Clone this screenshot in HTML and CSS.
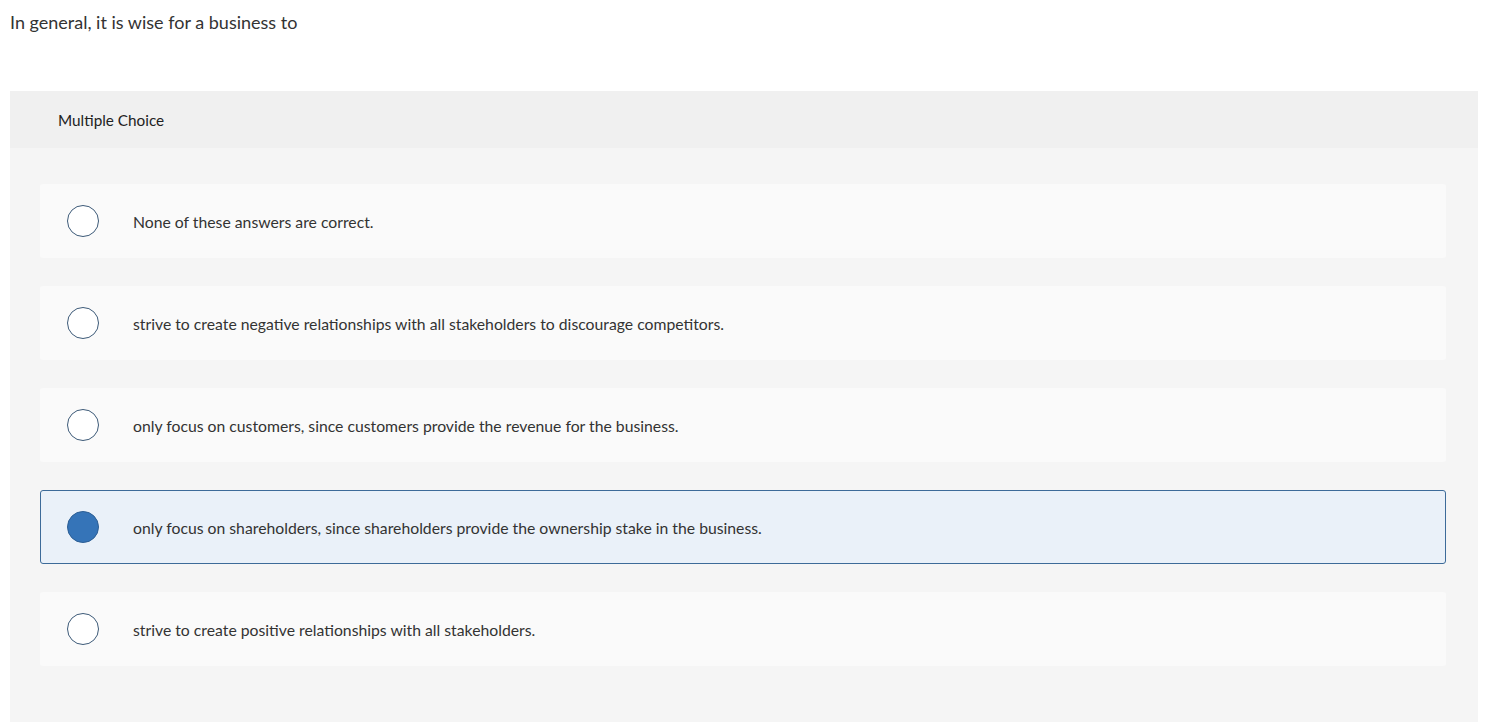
FILE: index.html
```html
<html>
<head>
    <title>Multiple Choice</title>
    <link rel="stylesheet" href="styles.css">
</head>
<body>
    <p class="question">In general, it is wise for a business to</p>
    <section class="panel">
        <div class="panel-head">Multiple Choice</div>
        <div class="choices">
            <div class="choice">
                <span class="radio"></span>
                <span class="label">None of these answers are correct.</span>
            </div>
            <div class="choice">
                <span class="radio"></span>
                <span class="label">strive to create negative relationships with all stakeholders to discourage competitors.</span>
            </div>
            <div class="choice">
                <span class="radio"></span>
                <span class="label">only focus on customers, since customers provide the revenue for the business.</span>
            </div>
            <div class="choice selected">
                <span class="radio"></span>
                <span class="label">only focus on shareholders, since shareholders provide the ownership stake in the business.</span>
            </div>
            <div class="choice">
                <span class="radio"></span>
                <span class="label">strive to create positive relationships with all stakeholders.</span>
            </div>
        </div>
    </section>
</body>
</html>
```

FILE: styles.css
```css
body { margin: 0; padding: 0 24px 0 10px; font-family: "Lato", "Liberation Sans", sans-serif; color: #333; background: #fff; }
.question { margin: 0; padding-top: 11px; height: 91px; box-sizing: border-box; font-size: 18px; line-height: 22px; color: #333; }
.panel { background: #f5f5f5; min-height: 640px; }
.panel-head { background: #f0f0f0; height: 57px; padding-left: 48px; display: flex; align-items: center; font-size: 15.3px; color: #222; }
.choices { display: flex; flex-direction: column; gap: 28px; padding: 36px 32px 40px 30px; }
.choice { display: flex; align-items: center; height: 74px; box-sizing: border-box; background: #fafafa; border: 1px solid transparent; border-radius: 3px; padding-left: 26px; font-size: 15.75px; color: #333; }
.choice.selected { background: #eaf1f9; border-color: #3d6b99; }
.radio { width: 32px; height: 32px; box-sizing: border-box; border: 1.5px solid #3d5a78; border-radius: 50%; background: #fff; flex-shrink: 0; }
.selected .radio { background: #3574b8; border-color: #2d5f95; }
.label { margin-left: 34px; }
```
